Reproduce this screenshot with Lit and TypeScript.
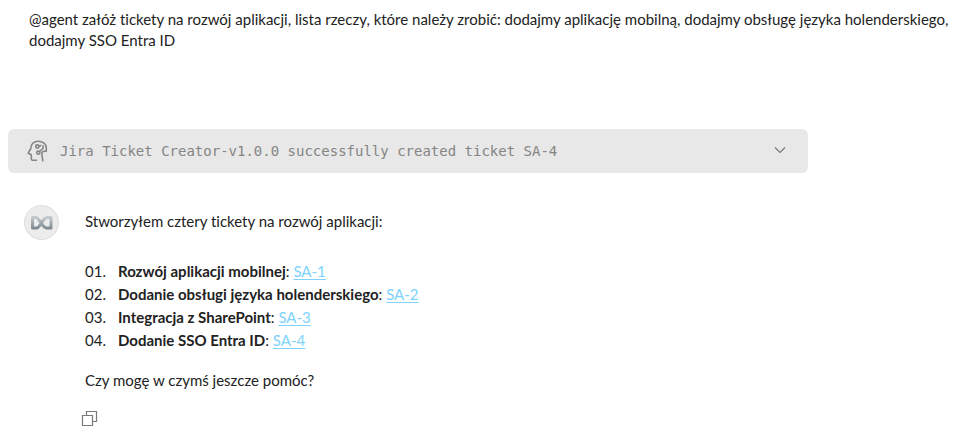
import { LitElement, html, css } from "lit";
import { customElement } from "lit/decorators.js";

interface Ticket {
  title: string;
  key: string;
}

const TICKETS: Ticket[] = [
  { title: "Rozwój aplikacji mobilnej", key: "SA-1" },
  { title: "Dodanie obsługi języka holenderskiego", key: "SA-2" },
  { title: "Integracja z SharePoint", key: "SA-3" },
  { title: "Dodanie SSO Entra ID", key: "SA-4" },
];

@customElement("app-root")
export class AppRoot extends LitElement {
  static styles = css`
    :host {
      display: block;
      background: #fff;
      color: #222;
      font: 15px/21px "Lato", "Liberation Sans", sans-serif;
      font-variant-ligatures: none;
    }
    p {
      margin: 0;
    }
    .prompt {
      padding: 9px 0 0 29px;
    }
    .status {
      display: flex;
      align-items: center;
      box-sizing: border-box;
      width: calc(100% - 16px);
      max-width: 800px;
      min-height: 44px;
      margin: 78px 8px 0;
      padding: 0 20px 0 18px;
      border: 0;
      border-radius: 6px;
      background: #e8e8e8;
      color: #858585;
      font: 14px/20px "DejaVu Sans Mono", monospace;
      text-align: left;
    }
    .head {
      flex: none;
      margin-right: 12px;
    }
    .label {
      flex: 1;
    }
    .reply {
      display: flex;
      gap: 25px;
      margin: 32px 24px 0;
    }
    .avatar {
      flex: none;
      width: 36px;
      height: 36px;
    }
    .body {
      padding-top: 6px;
    }
    ol {
      margin: 28px 0 18px;
      padding: 0;
      list-style: none;
      counter-reset: item;
    }
    li {
      display: flex;
      line-height: 23px;
      counter-increment: item;
    }
    li::before {
      content: counter(item, decimal-leading-zero) ".";
      width: 33px;
    }
    b {
      font-weight: 700;
    }
    a {
      color: #7dd3fc;
      text-underline-offset: 2px;
    }
    .copy {
      display: block;
      margin: 18px 0 0 -4px;
      padding: 0;
      border: 0;
      background: none;
    }
    svg {
      display: block;
    }
  `;

  render() {
    return html`
      <p class="prompt">
        @agent załóż tickety na rozwój aplikacji, lista rzeczy, które należy zrobić: dodajmy
        aplikację mobilną, dodajmy obsługę języka holenderskiego, dodajmy SSO Entra ID
      </p>
      <button class="status" type="button" aria-expanded="false">
        <svg class="head" width="22" height="22" viewBox="0 0 22 22" fill="none" stroke="#858585" stroke-width="1.600" stroke-linecap="round" stroke-linejoin="round">
          <path d="M10.500 20.200H6.800q-1.500 0-1.500-1.500v-4L2.200 13.200l2.600-4.700C5 4 8 1.200 12 1.200c5 0 8.300 2.800 8.300 6.600v3.400h-1.500c-2.300 0-3.200 1.300-2.900 3.300l.9 6.300" />
          <circle cx="11.300" cy="6.500" r="1.600" />
          <circle cx="12.300" cy="12.700" r="1.600" />
          <path d="M13.500 11.500L17 8.500V5.800M12.900 6.500l1.800-1" />
        </svg>
        <span class="label">Jira Ticket Creator-v1.0.0 successfully created ticket SA-4</span>
        <svg width="16" height="16" viewBox="0 0 16 16" fill="none" stroke="#777" stroke-width="1.200">
          <path d="M3 4.500l5 5 5-5" />
        </svg>
      </button>
      <div class="reply">
        <svg class="avatar" viewBox="0 0 36 36" role="img" aria-label="Asystent">
          <defs>
            <linearGradient id="metal" x1="0" y1="0" x2="0" y2="1">
              <stop offset="0" stop-color="#c3c9cd" />
              <stop offset="1" stop-color="#7f8b93" />
            </linearGradient>
          </defs>
          <circle cx="17.500" cy="17.500" r="17" fill="#ececec" stroke="#dcdcdc" />
          <path
            d="M8.500 12.500h3.500c3.500 0 6.500 10.500 10.500 10.500h4.500V12.500h-4c-4.500 0-6.500 10.500-10.500 10.500h-4z"
            fill="none"
            stroke="url(#metal)"
            stroke-width="3"
            stroke-linejoin="round"
          />
        </svg>
        <div class="body">
          <p>Stworzyłem cztery tickety na rozwój aplikacji:</p>
          <ol>
            ${TICKETS.map(
              (t) => html`<li><span><b>${t.title}</b>: <a href="#${t.key}">${t.key}</a></span></li>`,
            )}
          </ol>
          <p>Czy mogę w czymś jeszcze pomóc?</p>
          <button class="copy" type="button" aria-label="Kopiuj">
            <svg width="18" height="18" viewBox="0 0 18 18" fill="none" stroke="#7a7a7a" stroke-width="1.200">
              <path d="M1.500 6.500h10v10h-10zM5.500 6.500v-4h10v10h-4" />
            </svg>
          </button>
        </div>
      </div>
    `;
  }
}
